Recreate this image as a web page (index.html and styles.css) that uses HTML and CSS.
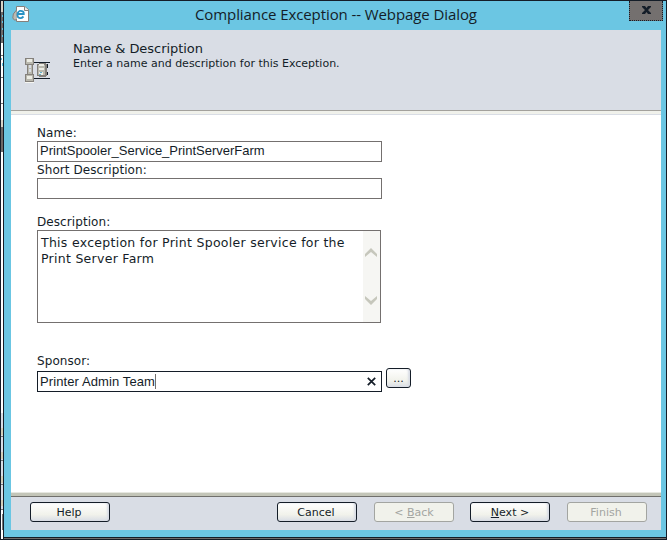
FILE: index.html
```html
<!DOCTYPE html>
<html lang="en">
<head>
<meta charset="utf-8">
<title>Compliance Exception -- Webpage Dialog</title>
<link rel="stylesheet" href="styles.css">
</head>
<body>
<div class="desktop">
  <svg class="behind" width="2" height="538" viewBox="0 0 2 538" shape-rendering="crispEdges">
    <path fill="#fff" d="M0 0h2v538H0z"/>
    <path fill="#d8d4c8" d="M0 0h2v11H0zM0 119h2v7H0z"/>
    <path fill="#6e6a69" d="M0 11h2v31H0zM0 126h2v25H0z"/>
    <path fill="#64c3e2" d="M1 14h1v2H1zM1 20h1v2H1zM1 27h1v2H1zM1 34h1v2H1zM0 57h1v2H0zM1 62h1v3H1z"/>
    <path fill="#d9dde5" d="M0 412h2v96H0z"/>
    <path fill="#d4cfb9" d="M0 427h2v7H0zM0 451h2v7H0zM0 475h2v7H0zM0 499h2v6H0z"/>
    <path fill="#777" d="M0 54h2v1H0zM0 76h2v1H0zM0 102h2v1H0zM0 435h2v1H0zM0 459h2v1H0zM0 483h2v1H0zM0 508h2v1H0zM1 513h1v16H1z"/>
  </svg>
  <div class="dialog">
    <div class="titlebar">
      <svg class="page-icon" width="17" height="17" viewBox="0 0 17 17">
        <path d="M4.5.5h8l4 3v12h-12z" fill="#fff" stroke="#85807b"/>
        <path d="M12.5.5v4h4" fill="#eee" stroke="#85807b"/>
        <path d="M4.500 4Q0 8 .8 12Q2 15.500 5 13.500" fill="#bcbab2" stroke="#85807b"/>
        <path d="M11.500 10.500Q8.500 13.500 5.800 10.800Q4.500 6.500 8 4.800Q12 4.500 11.800 8H5.500" fill="none" stroke="#2992c4" stroke-width="1.800"/>
      </svg>
      <h1>Compliance Exception -- Webpage Dialog</h1>
      <div class="close"><svg width="9" height="8" viewBox="0 0 9 8"><path d="M0 0h3l1.500 2L6 0h3v1L6 4l3 3v1H6L4.500 6 3 8H0V7l3-3L0 1z" fill="#141d28"/></svg></div>
    </div>
    <div class="content">
      <header>
        <svg class="wizard-icon" width="25" height="25" viewBox="0 0 25 25" shape-rendering="crispEdges">
          <path fill="#141d28" d="M9 4h16v1H9zM9 20h16v1H9zM22 6h1v4h-1zM22 14h1v3h-1zM20 10h2v1h-2z"/>
          <path fill="#85817c" d="M0 0h9v7H0zM2 7h6v9H2zM0 16h9v8H0zM14 5h7v1h-7zM12 6h10v12h-10zM14 18h7v1h-7z"/>
          <path fill="#b9b8ae" d="M1 1h7v5H1zM1 17h7v6H1zM3 7h4v9H3zM13 7h7v10h-7z"/>
          <path fill="#ecece4" d="M2 1h5v3H2zM2 18h5v3H2zM14 6h5v2h-5zM14 10h5v2h-5zM14 14h4v3h-4z"/>
          <path fill="#d9dde5" d="M4 7h2v3H4zM4 11h2v3H4z"/>
          <path fill="#f6f6f2" d="M0 24h9v1H0z"/>
          <path fill="#62afca" d="M15 14h2v1h-2zM14 16h2v1h-2z"/>
        </svg>
        <div class="heading">
          <h2>Name &amp; Description</h2>
          <p>Enter a name and description for this Exception.</p>
        </div>
      </header>
      <main>
        <div class="field"><div class="label l-name">Name:</div><div class="input"><span class="v-name">PrintSpooler_Service_PrintServerFarm</span></div></div>
        <div class="field"><div class="label l-short">Short Description:</div><div class="input"></div></div>
        <div class="field description"><div class="label l-desc">Description:</div>
          <div class="textarea">
            <div class="text"><span class="t-one">This exception for Print Spooler service for the</span><br><span class="t-two">Print Server Farm</span></div>
            <div class="scroll">
              <svg width="12" height="9" viewBox="0 0 12 9"><path d="M0 6L6 0l6 6v3L6 4 0 9z" fill="#c6c7bc"/></svg>
              <svg width="12" height="9" viewBox="0 0 12 9"><path d="M0 3l6 6 6-6V0L6 5 0 0z" fill="#c6c7bc"/></svg>
            </div>
          </div>
        </div>
        <div class="field sponsor"><div class="label l-sponsor">Sponsor:</div>
          <div class="row">
            <div class="input active"><span class="v-sponsor">Printer Admin Team</span><i class="caret"></i><svg class="clear" width="9" height="9" viewBox="0 0 9 9"><path d="M.8.8l7.400 7.400M8.200.8L.8 8.200" stroke="#141d28" stroke-width="1.700"/></svg></div>
            <div class="button browse"><span>...</span></div>
          </div>
        </div>
      </main>
      <footer>
        <div class="button help"><span class="b-help">Help</span></div>
        <div class="button cancel"><span class="b-cancel">Cancel</span></div>
        <div class="button back disabled"><span class="b-back">&lt; <u>B</u>ack</span></div>
        <div class="button next"><span class="b-next"><u>N</u>ext &gt;</span></div>
        <div class="button finish disabled"><span class="b-finish">Finish</span></div>
      </footer>
    </div>
  </div>
</div>
</body>
</html>
```
FILE: styles.css
```css
* { box-sizing: border-box; }
body { margin: 0; color: #141d28; font-family: "DejaVu Sans", sans-serif; font-size: 12px; }
h1, h2, p { margin: 0; font-weight: normal; white-space: nowrap; }
svg { display: block; flex: none; }
.desktop { width: 667px; height: 540px; display: flex; padding: 1px 0 1px 1px; background: #141d28; overflow: hidden; }
.dialog { width: 664px; height: 538px; border-left: 1px solid #141d28; border-right: 1px solid #141d28; background: linear-gradient(#6bc6e3 536px, #141d28 536px, #141d28 537px, #706c6b 537px); }
.titlebar { height: 29px; display: flex; padding-left: 8px; }
.page-icon { margin-top: 5px; }
h1 { width: 434px; margin-left: 166px; font: 15px/26px "Open Sans", sans-serif; letter-spacing: -.09px; }
.close { width: 34px; height: 20px; flex: none; border: 1px dotted #141d28; border-top: 0; background: #74706f; display: flex; justify-content: center; padding-top: 5px; }
.content { width: 650px; height: 500px; margin-left: 7px; display: flex; flex-direction: column; background: #fff; }
header { height: 81px; flex: none; display: flex; background: #d9dde5; border-bottom: 1px solid #a3a19c; }
.wizard-icon { margin: 28px 0 0 14px; }
.heading { margin: 10px 0 0 23px; }
h2 { font-size: 13px; line-height: 17px; letter-spacing: -.05px; }
header p { font-size: 11px; line-height: 14px; }
main { flex: 1; min-height: 0; padding: 12px 0 0 26px; border-top: 3px solid #f0f1eb; background: linear-gradient(#d9dde5, #d9dde5) 0 0 / 100% 1px no-repeat #fff; }
.label { height: 15px; line-height: 15px; white-space: nowrap; letter-spacing: .08px; }
.l-short { height: 16px; line-height: 16px; }
.input { width: 345px; height: 21px; border: 1px solid #74706f; padding-left: 2px; display: flex; font: 13px/18px "Liberation Sans", sans-serif; white-space: nowrap; }
.description { margin-top: 16px; }
.textarea { width: 344px; height: 93px; border: 1px solid #74706f; display: flex; justify-content: space-between; }
.text { padding: 4px 0 0 3px; font-size: 12.500px; line-height: 16px; letter-spacing: .28px; white-space: nowrap; }
.scroll { width: 17px; background: #f6f6f3; padding: 17px 2px; display: flex; flex-direction: column; justify-content: space-between; flex: none; }
.sponsor { margin-top: 30px; }
.sponsor .label { height: 18px; line-height: 16px; }
.v-sponsor { letter-spacing: .1px; line-height: 19px; }
.row { display: flex; align-items: flex-start; gap: 4px; }
.active { border-color: #141d28; }
.caret { width: 1px; height: 15px; margin-top: 2px; background: #74706f; }
.clear { margin: 5px 5px 0 auto; }
.button { width: 80px; height: 20px; border: 1px solid #141d28; border-radius: 3px; background: linear-gradient(#fff, #f1f2eb 65%, #d9dde5); box-shadow: inset -2px 0 2px #d9dde5; text-align: center; font-size: 11px; line-height: 19px; white-space: nowrap; }
.help, .cancel, .finish { padding-right: 2px; }
.button.browse { width: 25px; margin-top: -3px; }
footer { height: 38px; flex: none; border-top: 1px solid #e6e7e0; display: flex; padding: 9px 0 0 19px; background: linear-gradient(#c3c5b8 3px, #706f6b 3px, #706f6b 4px, #d9dde5 4px); }
.cancel { margin-left: 167px; }
.back { margin-left: 17px; }
.next { margin-left: 16px; }
.finish { margin-left: 17px; }
.disabled { border-color: #a3a5a1; color: #a3a5a1; background: #f1f2eb; box-shadow: none; }
```
